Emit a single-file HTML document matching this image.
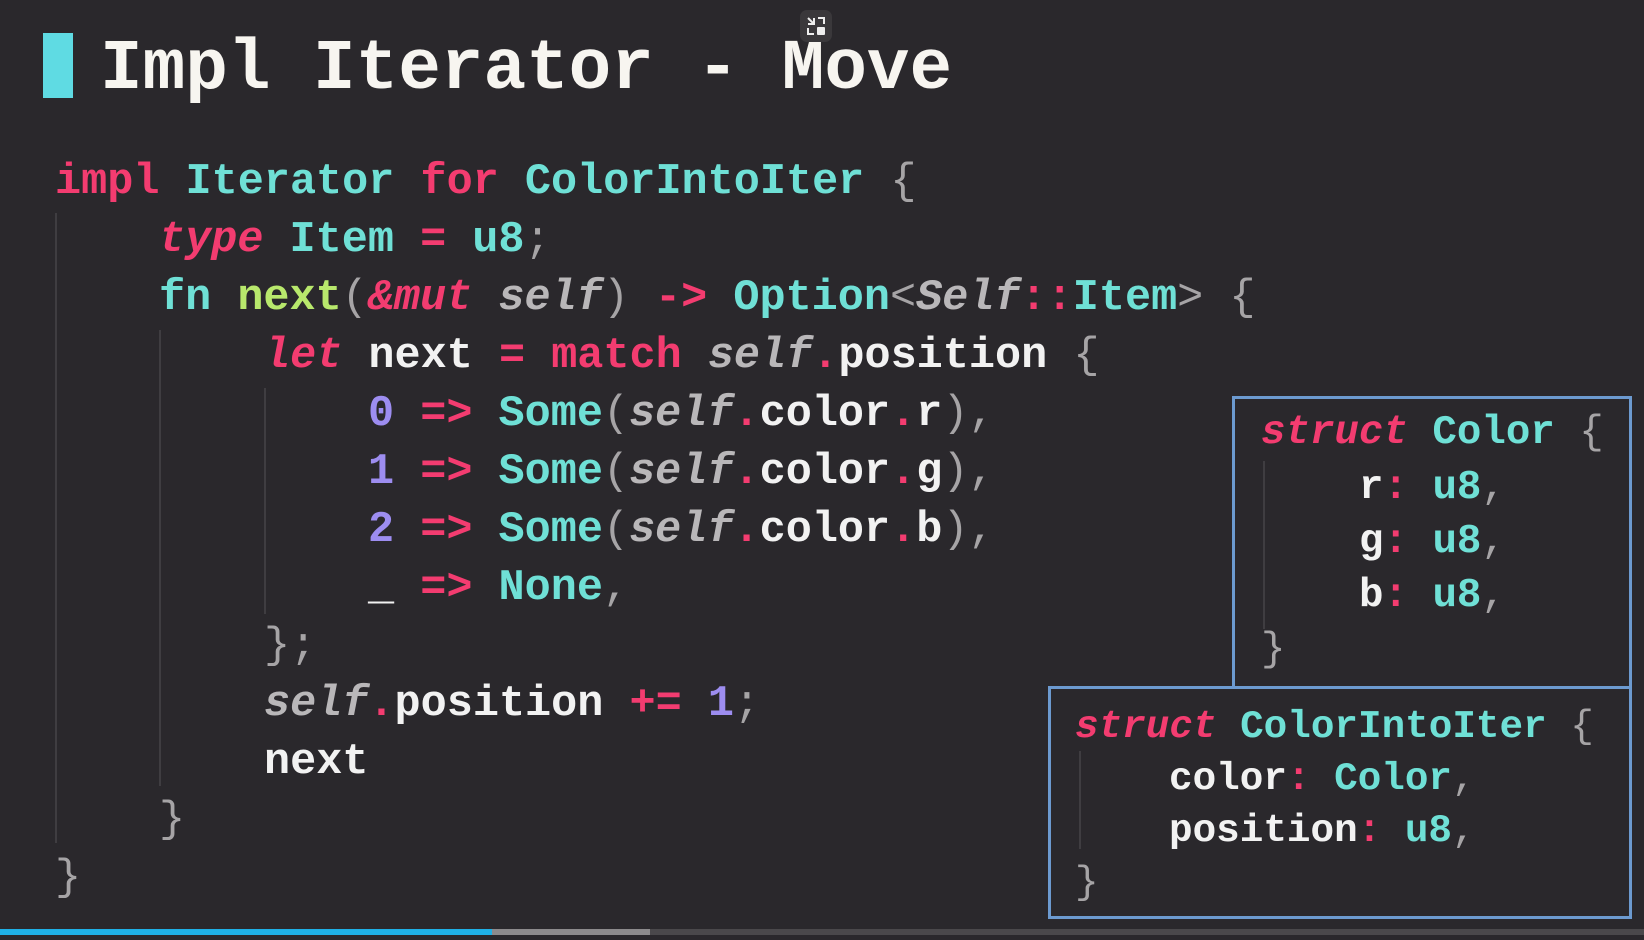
<!DOCTYPE html>
<html><head><meta charset="utf-8"><style>
html,body{margin:0;padding:0;}
body{width:1644px;height:935px;background:#2a282c;position:relative;overflow:hidden;font-family:"Liberation Mono",monospace;font-weight:bold;}
.l{position:absolute;white-space:pre;font-size:43.5px;line-height:58px;color:#f2f2f2;}
.b1{font-size:40.8px;line-height:54.5px;}
.b2{font-size:39.3px;line-height:52.5px;}
.k{color:#f33c70}.t{color:#6fe0d6}.g{color:#a6a4a6;font-weight:normal}.i{font-style:italic}
.f{color:#b8e86c}.n{color:#9d8df0}.w{color:#f4f4f4}.s{color:#b9b7b9;font-style:italic}
.guide{position:absolute;width:2px;background:#3f3d41;}
.box{position:absolute;border:3px solid #6c9ad0;box-sizing:border-box;background:#2a282c;}
#code{position:absolute;left:0;top:5px;width:1000px;height:935px;}
</style></head><body>
<div style="position:absolute;left:43px;top:33px;width:30px;height:65px;background:#5fdbe3"></div>
<div style="position:absolute;left:100px;top:25px;font-size:71px;line-height:90px;color:#f7f5f0;white-space:pre">Impl Iterator - Move</div>
<div style="position:absolute;left:800px;top:10px;width:32px;height:32px;border-radius:7px;background:#3a383b"></div>
<svg style="position:absolute;left:804px;top:14px" width="24" height="24" viewBox="0 0 24 24"><path d="M4 4l6 6M4 10h6V4M14 4h6v6M4 14v6h6" stroke="#eee" stroke-width="2" fill="none"/><rect x="13" y="13" width="8" height="8" rx="1" fill="#eee"/></svg>

<div id="code">
<div class="guide" style="left:55px;top:208px;height:630px"></div>
<div class="guide" style="left:159px;top:325px;height:456px"></div>
<div class="guide" style="left:264px;top:383px;height:226px"></div>

<div class="l" style="left:55px;top:149px"><span class="k">impl</span> <span class="t">Iterator</span> <span class="k">for</span> <span class="t">ColorIntoIter</span> <span class="g">{</span></div>
<div class="l" style="left:159px;top:207px"><span class="k i">type</span> <span class="t">Item</span> <span class="k">=</span> <span class="t">u8</span><span class="g">;</span></div>
<div class="l" style="left:159px;top:265px"><span class="t">fn</span> <span class="f">next</span><span class="g">(</span><span class="k i">&amp;mut</span> <span class="s">self</span><span class="g">)</span> <span class="k">-&gt;</span> <span class="t">Option</span><span class="g">&lt;</span><span class="s">Self</span><span class="k">::</span><span class="t">Item</span><span class="g">&gt;</span> <span class="g">{</span></div>
<div class="l" style="left:264px;top:323px"><span class="k i">let</span> next <span class="k">=</span> <span class="k">match</span> <span class="s">self</span><span class="k">.</span>position <span class="g">{</span></div>
<div class="l" style="left:368px;top:381px"><span class="n">0</span> <span class="k">=&gt;</span> <span class="t">Some</span><span class="g">(</span><span class="s">self</span><span class="k">.</span>color<span class="k">.</span>r<span class="g">),</span></div>
<div class="l" style="left:368px;top:439px"><span class="n">1</span> <span class="k">=&gt;</span> <span class="t">Some</span><span class="g">(</span><span class="s">self</span><span class="k">.</span>color<span class="k">.</span>g<span class="g">),</span></div>
<div class="l" style="left:368px;top:497px"><span class="n">2</span> <span class="k">=&gt;</span> <span class="t">Some</span><span class="g">(</span><span class="s">self</span><span class="k">.</span>color<span class="k">.</span>b<span class="g">),</span></div>
<div class="l" style="left:368px;top:555px">_ <span class="k">=&gt;</span> <span class="t">None</span><span class="g">,</span></div>
<div class="l" style="left:264px;top:613px"><span class="g">};</span></div>
<div class="l" style="left:264px;top:671px"><span class="s">self</span><span class="k">.</span>position <span class="k">+=</span> <span class="n">1</span><span class="g">;</span></div>
<div class="l" style="left:264px;top:729px">next</div>
<div class="l" style="left:159px;top:787px"><span class="g">}</span></div>
<div class="l" style="left:55px;top:845px"><span class="g">}</span></div>
</div>

<div class="box" style="left:1232px;top:396px;width:400px;height:294px">
<div class="guide" style="left:28px;top:62px;height:168px"></div>
<div class="l b1" style="left:26px;top:7px"><span class="k i">struct</span> <span class="t">Color</span> <span class="g">{</span></div>
<div class="l b1" style="left:124px;top:62px">r<span class="k">:</span> <span class="t">u8</span><span class="g">,</span></div>
<div class="l b1" style="left:124px;top:116px">g<span class="k">:</span> <span class="t">u8</span><span class="g">,</span></div>
<div class="l b1" style="left:124px;top:170px">b<span class="k">:</span> <span class="t">u8</span><span class="g">,</span></div>
<div class="l b1" style="left:26px;top:224px"><span class="g">}</span></div>
</div>
<div class="box" style="left:1048px;top:686px;width:584px;height:233px">
<div class="guide" style="left:28px;top:62px;height:98px"></div>
<div class="l b2" style="left:24px;top:12px"><span class="k i">struct</span> <span class="t">ColorIntoIter</span> <span class="g">{</span></div>
<div class="l b2" style="left:118px;top:64px">color<span class="k">:</span> <span class="t">Color</span><span class="g">,</span></div>
<div class="l b2" style="left:118px;top:116px">position<span class="k">:</span> <span class="t">u8</span><span class="g">,</span></div>
<div class="l b2" style="left:24px;top:168px"><span class="g">}</span></div>
</div>

<div style="position:absolute;left:0;top:929px;width:1644px;height:6px;background:#4a484b"></div>
<div style="position:absolute;left:0;top:929px;width:650px;height:6px;background:#8c8a8c"></div>
<div style="position:absolute;left:0;top:929px;width:492px;height:6px;background:#1fb0e6"></div>
</body></html>
